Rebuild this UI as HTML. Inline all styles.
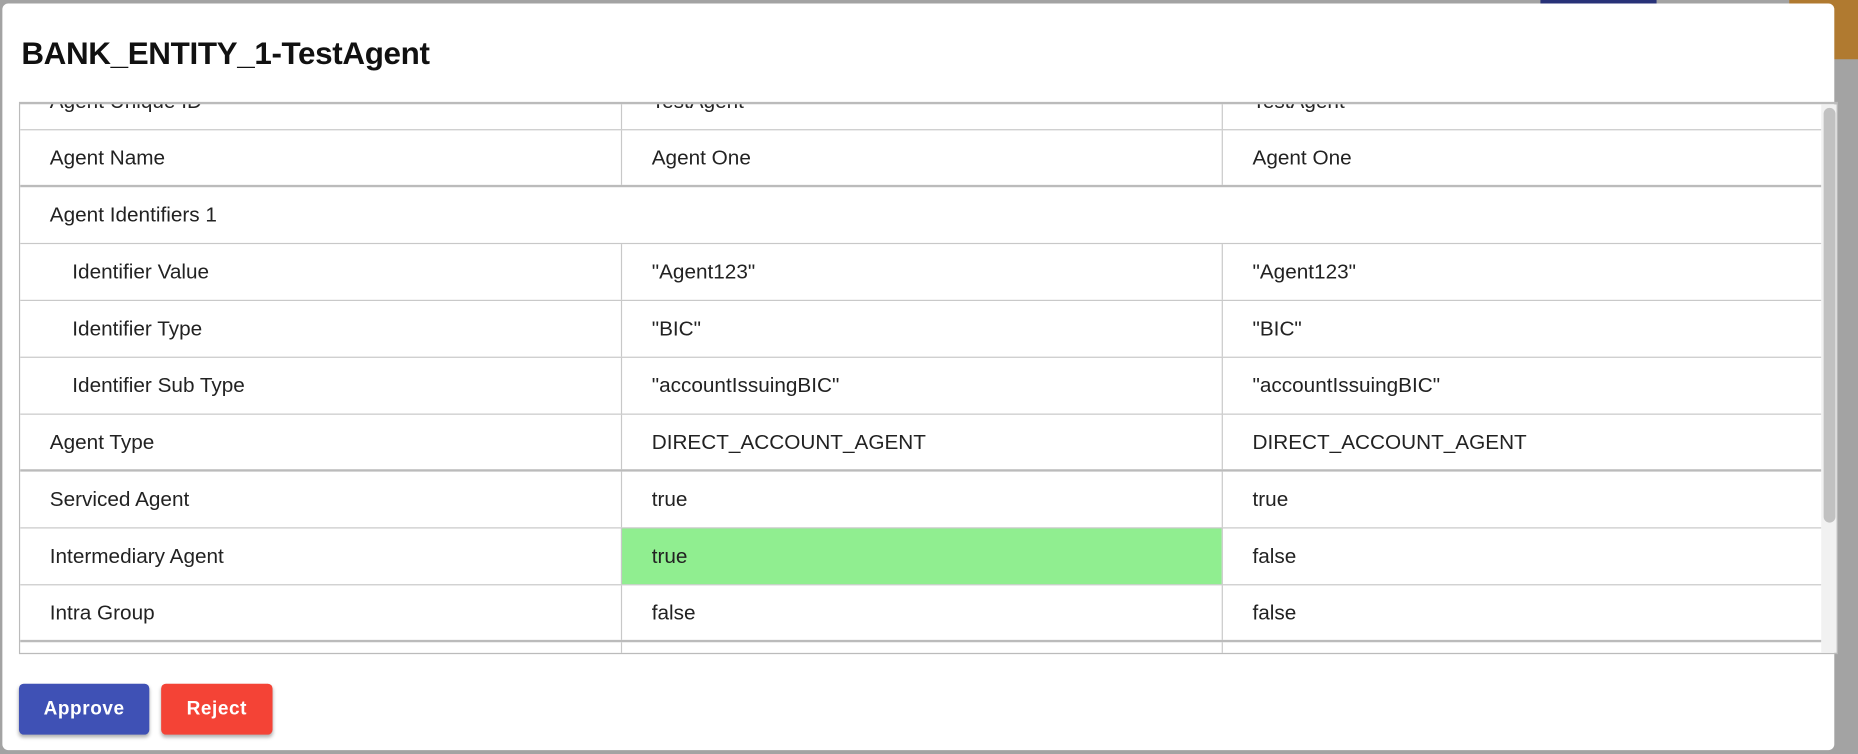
<!DOCTYPE html>
<html><head><meta charset="utf-8"><style>
html,body{margin:0;padding:0;width:1858px;height:753px;overflow:hidden;background:#a3a3a3;}
#s{position:absolute;left:0;top:0;width:1568px;height:636px;transform:scale(1.18495);transform-origin:0 0;font-family:"Liberation Sans",sans-serif;}
.modal{position:absolute;left:2px;top:3px;width:1546px;height:630px;background:#fff;border-radius:5px;}
.title{position:absolute;left:16px;top:27px;font-size:26.5px;font-weight:bold;color:#111;letter-spacing:-0.3px;}
.tbl{position:absolute;left:14px;top:83px;width:1535px;height:466px;border:1px solid #bbb;border-top:2px solid #bbb;overflow:hidden;box-sizing:border-box;}
.rows{position:absolute;left:0;top:-26px;width:1520px;}
.r{height:47px;border-bottom:1px solid #c8c8c8;position:relative;font-size:17.5px;color:#222;}
.r.t{border-bottom:2px solid #bbb;height:46px;}
.c{position:absolute;top:0;height:100%;line-height:47px;box-sizing:border-box;padding-left:25px;white-space:nowrap;}
.c1{left:0;width:507px;}
.c2{left:507px;width:507px;border-left:1px solid #c8c8c8;}
.c3{left:1014px;width:506px;border-left:1px solid #c8c8c8;}
.ind{padding-left:44px;}
.g{background:#90ee90;}
.sb{position:absolute;left:1520px;top:0;width:14px;height:100%;background:#f1f1f1;}
.th{position:absolute;left:2px;top:3px;width:10px;height:350px;background:#c1c1c1;border-radius:5px;}
.btn{position:absolute;top:574px;height:43px;border-radius:4px;color:#fff;font-weight:bold;font-size:16px;line-height:43px;text-align:center;box-shadow:0 2px 3px rgba(0,0,0,.3);letter-spacing:.5px;}
</style></head><body><div id="s">
<div style="position:absolute;left:1300px;top:0;width:98px;height:4px;background:#283278"></div>
<div style="position:absolute;left:1510px;top:0;width:58px;height:50px;background:#b07a30"></div>
<div class="modal">
<div class="title">BANK_ENTITY_1-TestAgent</div>
<div class="tbl"><div class="rows">
<div class="r"><div class="c c1">Agent Unique ID</div><div class="c c2">TestAgent</div><div class="c c3">TestAgent</div></div>
<div class="r t"><div class="c c1">Agent Name</div><div class="c c2">Agent One</div><div class="c c3">Agent One</div></div>
<div class="r"><div class="c c1">Agent Identifiers 1</div></div>
<div class="r"><div class="c c1 ind">Identifier Value</div><div class="c c2">"Agent123"</div><div class="c c3">"Agent123"</div></div>
<div class="r"><div class="c c1 ind">Identifier Type</div><div class="c c2">"BIC"</div><div class="c c3">"BIC"</div></div>
<div class="r"><div class="c c1 ind">Identifier Sub Type</div><div class="c c2">"accountIssuingBIC"</div><div class="c c3">"accountIssuingBIC"</div></div>
<div class="r t"><div class="c c1">Agent Type</div><div class="c c2">DIRECT_ACCOUNT_AGENT</div><div class="c c3">DIRECT_ACCOUNT_AGENT</div></div>
<div class="r"><div class="c c1">Serviced Agent</div><div class="c c2">true</div><div class="c c3">true</div></div>
<div class="r"><div class="c c1">Intermediary Agent</div><div class="c c2 g">true</div><div class="c c3">false</div></div>
<div class="r t"><div class="c c1">Intra Group</div><div class="c c2">false</div><div class="c c3">false</div></div>
<div class="r"><div class="c c1"></div><div class="c c2"></div><div class="c c3"></div></div>
</div><div class="sb"><div class="th"></div></div></div>
<div class="btn" style="left:14px;width:110px;background:#3f51b5">Approve</div>
<div class="btn" style="left:134px;width:94px;background:#f44336">Reject</div>
</div>
</div></body></html>
